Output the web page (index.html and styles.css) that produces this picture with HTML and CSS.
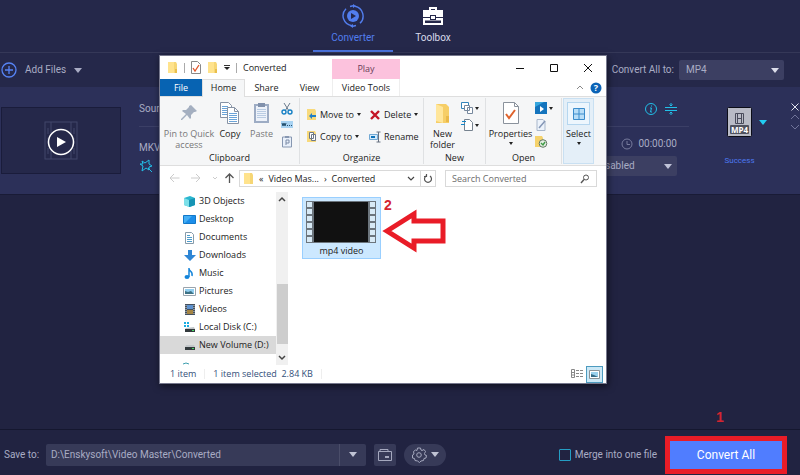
FILE: index.html
```html
<!DOCTYPE html>
<html lang="en">
<head>
<meta charset="utf-8">
<title>Video Converter</title>
<link rel="stylesheet" href="styles.css">
</head>
<body>
<div class="app">
  <nav class="tabs">
    <a class="tab active" href="#converter">
      <svg width="24" height="24" viewBox="0 0 24 24" fill="none" stroke="#527eee" stroke-width="1.4"><circle cx="12" cy="12" r="6" fill="#527eee" stroke="none"/><path d="M10 9v6l5-3z" fill="#25284a" stroke="none"/><path d="M14 2.3a10 10 0 0 1 5 17M11 21.7a10 10 0 0 1-6-17M9 2.5l3-.7M15 21.5l-3 .7"/><path d="M12 0v4l3-2zM12 20v4l-3-2z" fill="#527eee" stroke="none"/></svg>
      <span>Converter</span>
    </a>
    <a class="tab" href="#toolbox">
      <svg width="24" height="24" viewBox="0 0 24 24" fill="#fff"><path d="M8 6V3h8v3h6v7h-7v-2H9v2H2V6zM10 6h4V5h-4z" fill-rule="evenodd"/><path d="M10 12h4v3h-4z"/><path d="M2 14h7v2h6v-2h7v7H2zM4 16.500V19h16v-2.500z" fill-rule="evenodd"/></svg>
      <span>Toolbox</span>
    </a>
  </nav>

  <div class="toolbar">
    <button class="add" type="button">
      <svg width="16" height="16" viewBox="0 0 16 16" fill="none" stroke="#5683f5" stroke-width="1.3"><circle cx="8" cy="8" r="7"/><path d="M8 4v8M4 8h8"/></svg>
      <span>Add Files</span>
      <svg width="8" height="5" viewBox="0 0 8 5"><path d="M0 0h8L4 5z" fill="#a9acc4"/></svg>
    </button>
    <label class="to" for="format">Convert All to:</label>
    <span class="pick format"><select id="format"><option>MP4</option></select><svg width="8" height="5" viewBox="0 0 8 5"><path d="M0 0h8L4 5z" fill="#dcdeea"/></svg></span>
  </div>

  <main class="list">
    <article class="card">
      <div class="thumb">
        <svg width="36" height="42" viewBox="0 0 36 42" fill="none" stroke="#42466a"><rect x="2" y="2" width="32" height="37"/><path d="M8 2v37M28 2v37M8 15h20M8 26h20M5 8v6M5 18v6M5 28v6M31 8v6M31 18v6M31 28v6"/><circle cx="18" cy="22" r="12.500" fill="#25284a" stroke="#fff" stroke-width="1.500"/><path d="M14 17v10l9-5z" fill="#fff" stroke="none"/></svg>
      </div>
      <div class="details">
        <div class="source">
          <span>Source:</span>
          <span class="tools">
            <svg width="12" height="12" viewBox="0 0 12 12" fill="none" stroke="#22bfe8"><circle cx="6" cy="6" r="5.500"/><path d="M5 5h1.500L5.500 9H7M6.500 2.500v1"/></svg>
            <svg width="12" height="12" viewBox="0 0 12 12" fill="none" stroke="#22bfe8"><path d="M0 4.500h12M0 7.500h12M6 0v3M6 9v3M4.500 1.500L6 3l1.500-1.500M4.500 10.500L6 9l1.500 1.500"/></svg>
          </span>
        </div>
        <div class="meta">
          <span>MKV</span>
          <time><svg width="12" height="12" viewBox="0 0 12 12" fill="none" stroke="#777b9d"><circle cx="6" cy="6" r="5"/><path d="M6 3v3.500h3"/></svg>00:00:00</time>
        </div>
        <div class="extra">
          <svg width="14" height="14" viewBox="0 0 14 14" fill="none" stroke="#22bfe8"><path d="M3 2l3 2 4-3v4l3 2-3 1v3L7 9l-4 3 1-5-3-2h3zM9 9l4 4"/></svg>
          <span class="pick subtitle"><select aria-label="Subtitle"><option>Disabled</option></select><svg width="8" height="5" viewBox="0 0 8 5"><path d="M0 0h8L4 5z" fill="#c0c3d8"/></svg></span>
        </div>
      </div>
      <div class="result">
        <button class="profile" type="button" aria-label="Output profile">
          <svg width="25" height="31" viewBox="0 0 25 31"><rect x=".5" y=".5" width="24" height="29" rx="1" fill="#b9bbc6" stroke="#0c0d18"/><path d="M8.500 6.500h8v10h-8zM10.500 6v11M14.500 6v11M10.500 11.500h4" fill="none" stroke="#4a4c5c"/><rect x="3" y="18" width="19" height="9" rx="1" fill="#50525f"/><text x="12.500" y="25.500" text-anchor="middle" class="badge">MP4</text></svg>
          <svg width="8" height="5" viewBox="0 0 8 5"><path d="M0 0h8L4 5z" fill="#22cdf2"/></svg>
        </button>
        <span class="success">Success</span>
      </div>
      <div class="order">
        <svg width="10" height="30" viewBox="0 0 10 30" fill="none"><path d="M1.500 1.500l7 7M8.500 1.500l-7 7" stroke="#e1e3ee"/><path d="M1 17l4-4 4 4M1 23l4 4 4-4" stroke="#70749a"/></svg>
      </div>
    </article>
  </main>

  <footer class="footer">
    <label for="path">Save to:</label>
    <div class="path"><input id="path" type="text" value="D:\Enskysoft\Video Master\Converted"><button type="button" aria-label="Recent folders"><svg width="8" height="5" viewBox="0 0 8 5"><path d="M0 0h8L4 5z" fill="#c0c3d4"/></svg></button></div>
    <button class="open" type="button" aria-label="Open folder"><svg width="14" height="12" viewBox="0 0 14 12" fill="none" stroke="#a5a8be"><path d="M.5 2.500h13v9H.5zM2 2.500V.500h8v2"/><path d="M7 8h4" stroke-width="2"/></svg></button>
    <button class="settings" type="button" aria-label="Settings"><svg width="16" height="16" viewBox="0 0 16 16" fill="none" stroke="#a5a8be"><path d="M6.500 1h3l.5 2 1 .5 2-1 1.500 2-1 2 .5 1.500 1.500.5-.5 2.500-2 .5-.5 2-2.500.5-1.500 1.500-2-1.500-2.500-.5-.5-2-2-.5V8l1.500-1-.5-2.500 2-1.500 1.500.5z"/><circle cx="8" cy="8" r="2.300"/></svg><svg width="8" height="5" viewBox="0 0 8 5"><path d="M0 0h8L4 5z" fill="#c0c3d4"/></svg></button>
    <label class="merge"><input type="checkbox">Merge into one file</label>
    <div class="action"><button class="convert" type="button">Convert All</button><span class="note one">1</span></div>
  </footer>
</div>

<section class="explorer" aria-label="Converted">
  <header class="titlebar">
    <div class="quick">
      <svg width="11" height="13" viewBox="0 0 11 13"><path d="M1 1h8l1 2v9H1z" fill="#f6d675"/><path d="M1 1h6v11H1z" fill="#ffe38d"/><path d="M8 8h2v4H8z" fill="#e9bf4c"/></svg>
      <i></i>
      <svg width="10" height="13" viewBox="0 0 10 13"><path d="M.5.500h6l3 3v9h-9z" fill="#fff" stroke="#898989"/><path d="M2 7l2 3 4-6" fill="none" stroke="#e2562a" stroke-width="1.300"/></svg>
      <svg width="11" height="13" viewBox="0 0 11 13"><path d="M1 1h8l1 2v9H1z" fill="#f6d675"/><path d="M1 1h6v11H1z" fill="#ffe38d"/><path d="M8 8h2v4H8z" fill="#e9bf4c"/></svg>
      <svg width="6" height="6" viewBox="0 0 6 6"><path d="M0 .500h6" stroke="#333"/><path d="M0 2h6L3 5z" fill="#222"/></svg>
      <i></i>
      <span>Converted</span>
    </div>
    <span class="context">Play</span>
    <div class="controls">
      <button type="button" aria-label="Minimize"><svg width="10" height="10"><path d="M1 5.500h8" stroke="#111"/></svg></button>
      <button type="button" aria-label="Maximize"><svg width="10" height="10"><path d="M1.500 1.500h7v7h-7z" fill="none" stroke="#111"/></svg></button>
      <button type="button" aria-label="Close"><svg width="10" height="10"><path d="M1 1l8 8M9 1L1 9" stroke="#111"/></svg></button>
    </div>
  </header>
  <nav class="menu">
    <a class="file" href="#file">File</a><a class="home" href="#home">Home</a><a href="#share">Share</a><a href="#view">View</a><a class="video" href="#video">Video Tools</a>
    <span class="help"><svg width="8" height="5" viewBox="0 0 8 5"><path d="M1 4l3-3 3 3" fill="none" stroke="#888"/></svg><svg width="12" height="12" viewBox="0 0 12 12"><circle cx="6" cy="6" r="5.500" fill="#0b63b6"/><text x="6" y="9" text-anchor="middle" class="question">?</text></svg></span>
  </nav>

  <div class="ribbon">
    <div class="group clipboard">
      <div class="tools-row">
        <button class="big dim pin" type="button"><svg width="18" height="22" viewBox="0 0 18 22"><path d="M11 3l6 6-2 1-1 0-3 3v3l-1 1-3-4-5 5-1 0 0-1 5-5-4-3 1-1h3l3-3V4z" fill="#a4afc0"/></svg>Pin to Quick<br>access</button>
        <button class="big copy" type="button"><svg width="20" height="22" viewBox="0 0 20 22"><path d="M.500.500h8l3 3v12H.5z" fill="#fff" stroke="#8793a5"/><path d="M2 4.500h6M2 6.500h7M2 8.500h7M2 10.500h7M2 12.500h7" stroke="#6ba4d8"/><path d="M7.500 5.500h7l4 4v12h-11z" fill="#fff" stroke="#8793a5"/><path d="M14.500 5.500v4h4" fill="none" stroke="#8793a5"/><path d="M9 11.500h8M9 13.500h8M9 15.500h8M9 17.500h8M9 19.500h8" stroke="#6ba4d8"/></svg>Copy</button>
        <button class="big dim paste" type="button"><svg width="18" height="22" viewBox="0 0 18 22"><path d="M1 2h15v19H1z" fill="#9dacc4"/><path d="M3 4h11v15H3z" fill="#edf2fa"/><path d="M5 1h7v4H5z" fill="#8191ac"/><path d="M4 7.500h9M4 9.500h9M4 11.500h9M4 13.500h9M4 15.500h9" stroke="#b9cce3"/></svg>Paste</button>
        <div class="stack small edit">
          <svg width="12" height="12" viewBox="0 0 12 12" fill="none"><path d="M3 0l5 8M9 0L4 8" stroke="#697a8c"/><circle cx="3" cy="9" r="2" stroke="#1680c5" stroke-width="1.400"/><circle cx="9" cy="9" r="2" stroke="#1680c5" stroke-width="1.400"/></svg>
          <svg width="12" height="8" viewBox="0 0 12 8"><path d="M0 0h12v7H0z" fill="#a7d2f2"/><path d="M1 2l1 3 1-3 1 3 1-3M6 4.500h1M8 4.500h1M10 4.500h1" fill="none" stroke="#24506f"/></svg>
          <svg width="12" height="13" viewBox="0 0 12 13"><path d="M1.500 2h9v10h-9z" fill="#e9f0fa" stroke="#8797b1"/><path d="M4 1h4v2H4z" fill="#8797b1"/><path d="M5 10V5h3v3H5" fill="none" stroke="#7c8ca7"/></svg>
        </div>
      </div>
      <span class="name">Clipboard</span>
    </div>
    <div class="group organize">
      <div class="tools-row">
        <div class="stack">
          <button type="button"><svg width="11" height="13" viewBox="0 0 11 13"><path d="M1 1h8l1 2v9H1z" fill="#f8da7c"/><path d="M10 7H6V5L3 8l3 3V9h4z" fill="#207fc8"/></svg>Move to<b></b></button>
          <button type="button"><svg width="11" height="13" viewBox="0 0 11 13"><path d="M1 1h8l1 2v9H1z" fill="#f8da7c"/><path d="M3.500 2.500h4v6h-4zM5.500 4.500h4v6h-4z" fill="#fff" stroke="#6c7888"/></svg>Copy to<b></b></button>
        </div>
        <div class="stack second">
          <button type="button"><svg width="12" height="12" viewBox="0 0 12 12"><path d="M2 2l8 8M10 2l-8 8" stroke="#c31526" stroke-width="2.400"/></svg>Delete<b></b></button>
          <button type="button"><svg width="12" height="12" viewBox="0 0 12 12"><path d="M.500 3.500h8v5h-8z" fill="#d5eafa" stroke="#72a9d4"/><path d="M2 6h4" stroke="#0d72b9" stroke-width="2"/><path d="M9.500 1v10M7.500 1h4M7.500 11h4" stroke="#667080"/></svg>Rename</button>
        </div>
      </div>
      <span class="name">Organize</span>
    </div>
    <div class="group new">
      <div class="tools-row">
        <button class="big" type="button"><svg width="18" height="22" viewBox="0 0 18 22"><path d="M2 2h10l3 3v16H2z" fill="#f6ce67"/><path d="M2 2l7 3v16l-7-2z" fill="#ffe69b"/><path d="M12 14h3v6h-3z" fill="#eab949"/></svg>New<br>folder</button>
        <div class="stack small">
          <span><svg width="12" height="12" viewBox="0 0 12 12" fill="#fff" stroke="#76889d"><path d="M.500.500h7v6h-7z" stroke="#3284bb"/><path d="M3.500 3.500h5v5h-5zM6.500 5.500h5v6h-5z"/></svg><b></b></span>
          <span><svg width="12" height="12" viewBox="0 0 12 12"><path d="M3.500.500h5l3 3v8h-8z" fill="#fff" stroke="#76828f"/><path d="M1 2.500h4M0 5.500h4" stroke="#1586c7"/></svg><b></b></span>
        </div>
      </div>
      <span class="name">New</span>
    </div>
    <div class="group launch">
      <div class="tools-row">
        <button class="big" type="button"><svg width="16" height="22" viewBox="0 0 16 22"><path d="M.500.500h11l4 4v17H.5z" fill="#fff" stroke="#8a929c"/><path d="M11.500.500v4h4" fill="none" stroke="#8a929c"/><path d="M3 12l3 4 6-8" fill="none" stroke="#df632d" stroke-width="2"/></svg>Properties<b></b></button>
        <div class="stack small">
          <span><svg width="12" height="12" viewBox="0 0 12 12"><path d="M0 0h12v12H0z" fill="#1474bd"/><path d="M0 0h9L0 5z" fill="#36a6dd"/><path d="M5 4v6l4-3z" fill="#fff"/></svg><b></b></span>
          <svg width="12" height="12" viewBox="0 0 12 12"><path d="M2 .500h6l2 2v9H2z" fill="#edf3fb" stroke="#a8b7cb"/><path d="M4 9l6-7" stroke="#8496b5" stroke-width="1.500"/></svg>
          <svg width="13" height="12" viewBox="0 0 13 12"><path d="M0 0h7l1 2v9H0z" fill="#f5d26c"/><circle cx="8" cy="7.500" r="3.800" fill="#e5eee3" stroke="#617562"/><path d="M6 7l2 2 2-3" fill="none" stroke="#3e9b46" stroke-width="1.400"/></svg>
        </div>
      </div>
      <span class="name">Open</span>
    </div>
    <button class="select" type="button"><span><svg width="12" height="12" viewBox="0 0 12 12" fill="#b8def8" stroke="#3c8dcc"><path d="M.500.500h11v11H.5zM6 .500v11M.500 6h11"/></svg></span>Select<b></b></button>
  </div>

  <div class="location">
    <div class="arrows">
      <svg width="76" height="12" viewBox="0 0 76 12" fill="none"><path d="M10.500 6H1M5 2L1 6l4 4M22 6h9M27 2l4 4-4 4" stroke="#cccccc"/><path d="M44 5l2 2 2-2" stroke="#ccc"/><path d="M60.500 11V2M56.500 6l4-4 4 4" stroke="#555" stroke-width="1.300"/></svg>
    </div>
    <div class="crumbs"><svg width="11" height="13" viewBox="0 0 11 13"><path d="M1 1h8l1 2v9H1z" fill="#f6d675"/><path d="M1 1h6v11H1z" fill="#ffe38d"/></svg><span>«</span><a href="#master">Video Mas...</a><span>›</span><a href="#converted">Converted</a>
      <svg class="down" width="8" height="6" viewBox="0 0 8 6"><path d="M1 1l3 3 3-3" fill="none" stroke="#444" stroke-width="1.200"/></svg>
      <button type="button" aria-label="Refresh"><svg width="10" height="10" viewBox="0 0 10 10" fill="none" stroke="#555" stroke-width="1.200"><path d="M7 2a3.500 3.500 0 1 1-4 0M3.500 0v2.500H1"/></svg></button>
    </div>
    <div class="search"><input type="search" aria-label="Search Converted" placeholder="Search Converted"><svg width="10" height="10" viewBox="0 0 10 10" fill="none" stroke="#555"><circle cx="6" cy="3.500" r="2.500"/><path d="M4 5.500L1 9" stroke-width="1.400"/></svg></div>
  </div>

  <div class="content">
    <ul class="places">
      <li><svg width="13" height="13" viewBox="0 0 13 13"><path d="M1 3l6-2 5 2v7l-5 2-6-2z" fill="#2bb6cf"/><path d="M1 3l5 2v7l-5-2z" fill="#7de0e9"/><path d="M6 5l6-2v7l-6 2z" fill="#1694b4"/></svg>3D Objects</li>
      <li><svg width="13" height="13" viewBox="0 0 13 13"><path d="M.500 2.500h12v8H.5z" fill="#1c8eea" stroke="#1178c9"/><path d="M1 3h8l-7 7H1z" fill="#45aff5"/></svg>Desktop</li>
      <li><svg width="13" height="13" viewBox="0 0 13 13"><path d="M2.500 1.500h6l2 2v9h-8z" fill="#fff" stroke="#879baa"/><path d="M4 4.500h3M4 6.500h5M4 8.500h5M4 10.500h5" stroke="#4c9dcd"/></svg>Documents</li>
      <li><svg width="13" height="13" viewBox="0 0 13 13"><path d="M5 1h4v5h4l-6 6-6-6h4z" fill="#2e86d5"/></svg>Downloads</li>
      <li><svg width="13" height="13" viewBox="0 0 13 13"><path d="M6 1v9M6 2c1 3 4 2 3 7" fill="none" stroke="#1384da" stroke-width="1.500"/><ellipse cx="4" cy="10" rx="2.500" ry="2" fill="#1384da"/></svg>Music</li>
      <li><svg width="13" height="13" viewBox="0 0 13 13"><path d="M.500 2.500h12v8H.5z" fill="#fff" stroke="#9aa4ad"/><path d="M2 4h9v5H2z" fill="#91cef0"/><path d="M2 9V6l3 1 3-1 3 3z" fill="#3c7184"/></svg>Pictures</li>
      <li><svg width="13" height="13" viewBox="0 0 13 13"><path d="M2 1h10v11H2z" fill="#45505d"/><path d="M4 2h6v4H4z" fill="#5d91ce"/><path d="M4 7h6v4H4z" fill="#a58544"/><path d="M3 2v9M11 2v9" stroke="#d4dce3" stroke-dasharray="1 1"/></svg>Videos</li>
      <li><svg width="13" height="13" viewBox="0 0 13 13"><path d="M1 1h2v2H1zM4 1h2v2H4zM1 4h2v2H1zM4 4h2v2H4z" fill="#19ace0"/><path d="M3 7l8-1 1 2H2z" fill="#c2c6c9"/><path d="M2 8h10v3H2z" fill="#333a3d"/><path d="M9 9.500h2" stroke="#48dc67"/></svg>Local Disk (C:)</li>
      <li class="current"><svg width="13" height="13" viewBox="0 0 13 13"><path d="M3 6h8l1 2H2z" fill="#c2c6c9"/><path d="M2 8h10v3H2z" fill="#333a3d"/><path d="M9 9.500h2" stroke="#48dc67"/></svg>New Volume (D:)</li>
      <li><svg width="13" height="13" viewBox="0 0 13 13"><path d="M0 7l3-1 3 1" stroke="#3b9dad" fill="none"/></svg></li>
    </ul>
    <div class="scroll"><svg width="8" height="6" viewBox="0 0 8 6"><path d="M1 5l3-3 3 3" fill="none" stroke="#444" stroke-width="1.500"/></svg><div></div><svg width="8" height="6" viewBox="0 0 8 6"><path d="M1 1l3 3 3-3" fill="none" stroke="#444" stroke-width="1.500"/></svg></div>
    <div class="files">
      <figure class="clip">
        <svg width="70" height="42" viewBox="0 0 70 42"><path d="M0 0h70v42H0z" fill="#6c757d"/><path d="M8 1h54v40H8z" fill="#111"/><path d="M3.500 1v41M66.500 1v41" stroke="#d8eaf6" stroke-width="5" stroke-dasharray="5 2"/></svg>
        <figcaption>mp4 video</figcaption>
        <svg class="pointer" width="66" height="44" viewBox="0 0 66 44"><path d="M5 22L32 5v7h29v20H32v7z" fill="#fff" stroke="#e91c27" stroke-width="5"/></svg>
        <span class="note two">2</span>
      </figure>
    </div>
  </div>
  <div class="status"><span>1 item</span><span>1 item selected&nbsp; 2.84 KB</span>
    <div class="views"><svg width="12" height="10" viewBox="0 0 12 10" fill="none" stroke="#888"><path d="M.500.500h3v8h-3zM.500 3.500h3M.500 6h3M5 1.500h3M5 4.500h3M5 7.500h3M9 1.500h3M9 4.500h3M9 7.500h3"/></svg><span><svg width="11" height="9" viewBox="0 0 11 9"><path d="M.500.500h10v8H.5z" fill="#fff" stroke="#8b9297"/><path d="M2 2h7v5H2z" fill="#9ad1ed"/><path d="M2 7V4l3 1 4 2z" fill="#356a85"/></svg></span></div>
  </div>
</section>
</body>
</html>
```
FILE: styles.css
```css
* { box-sizing: border-box; }
body { margin: 0; font: 10px/14px Roboto, "Noto Sans", sans-serif; color: #a9acc4; background: #212341; overflow: hidden; }
button, input, select { font: inherit; color: inherit; border: 0; background: none; padding: 0; margin: 0; }
a { color: inherit; text-decoration: none; }
svg { display: block; flex: none; }

.app { display: flex; flex-direction: column; height: 100vh; background: #212341; }
.tabs { display: flex; justify-content: center; height: 53px; padding-right: 14px; background: #25284a; border-bottom: 1px solid #353858; }
.tab { display: flex; flex-direction: column; align-items: center; width: 80px; padding-top: 4px; gap: 3px; color: #d8daea; border-bottom: 2px solid transparent; }
.tab.active { color: #527eee; border-color: #4a72dd; }
.toolbar { display: flex; align-items: center; height: 34px; padding: 0 16px 0 1px; background: #25284a; }
.add { display: flex; align-items: center; gap: 8px; }
.to { margin-left: auto; margin-right: 5px; }
.pick { display: flex; align-items: center; position: relative; height: 20px; background: #3c3f62; border-radius: 2px; }
.pick select { appearance: none; width: 100%; height: 100%; padding: 0 7px; outline: 0; }
.pick svg { position: absolute; right: 5px; pointer-events: none; }
.format { width: 105px; }
.list { flex: 1; }
.card { display: flex; height: 108px; background: #2c3059; border-bottom: 1px solid #191b36; }
.thumb { display: flex; align-items: center; justify-content: center; width: 120px; height: 67px; margin: 20px 18px 0 1px; background: #25284a; border: 1px solid #1a1c3b; }
.details { flex: 1; padding-top: 14px; }
.source { display: flex; justify-content: space-between; height: 26px; padding: 1px 12px 0 0; border-bottom: 1px solid #3b3f66; }
.tools { display: flex; gap: 8px; padding-top: 1px; }
.meta { display: flex; justify-content: space-between; height: 29px; padding: 10px 12px 0 0; }
.meta time { display: flex; align-items: center; gap: 5px; height: 14px; }
.meta > span { padding-top: 4px; }
.extra { display: flex; justify-content: space-between; align-items: center; padding-right: 12px; }
.subtitle { width: 88px; }
.result { display: flex; flex-direction: column; align-items: center; width: 101px; padding-top: 20px; }
.profile { display: flex; align-items: center; gap: 7px; padding-left: 15px; }
.badge { font: bold 8px "Noto Sans", sans-serif; fill: #fff; }
.success { margin-top: 16px; font-size: 8px; color: #4d78f0; }
.order { width: 10px; padding-top: 15px; display: flex; justify-content: center; }

.footer { display: flex; align-items: center; height: 46px; padding: 4px 13px 0 4px; border-top: 1px solid #15172f; }
.footer > label:first-child { width: 42px; }
.path { display: flex; width: 320px; height: 22px; background: #373a58; border-radius: 2px; }
.path input { flex: 1; padding: 0 5px; outline: 0; }
.path button { display: flex; align-items: center; justify-content: center; width: 27px; border-left: 1px solid #4a4d69; }
.open { display: flex; align-items: center; justify-content: center; width: 22px; height: 22px; margin: 0 8px; background: #373a58; border-radius: 2px; }
.settings { display: flex; align-items: center; justify-content: center; gap: 4px; width: 42px; height: 22px; background: #373a58; border-radius: 11px; }
.merge { display: flex; align-items: center; gap: 4px; margin-left: auto; margin-right: 8px; }
.merge input { appearance: none; width: 12px; height: 12px; border: 1px solid #259dc3; border-radius: 1px; }
.action { position: relative; }
.convert { display: block; width: 122px; height: 38px; color: #fff; font-size: 12px; background: #507dff; border: 5px solid #e91c27; }
.note { position: absolute; font: bold 14px/14px "Liberation Sans", sans-serif; color: #d42430; }
.one { left: 51px; top: -26px; }

.explorer { position: absolute; left: 159px; top: 55px; width: 448px; color: #222; font: 9px/10px "Open Sans", "Noto Sans", sans-serif; background: #fff; border: 1px solid #76788d; box-shadow: 1px 2px 7px rgb(0 0 0 / 55%); }
.explorer b { display: inline-block; border: 2px solid transparent; border-top: 3px solid #222; border-bottom: 0; }
.titlebar { display: flex; height: 23px; }
.quick { display: flex; align-items: center; width: 172px; gap: 6px; padding-left: 7px; }
.quick i { width: 1px; height: 10px; background: #aaa; }
.context { width: 68px; margin-top: 3px; padding-top: 5px; text-align: center; color: #6a3e59; background: #fcc2dd; }
.controls { display: flex; margin-left: auto; padding-right: 1px; }
.controls button { display: flex; align-items: center; justify-content: center; width: 34px; }
.menu { display: flex; height: 18px; border-bottom: 1px solid #dedede; line-height: 17px; text-align: center; }
.menu a { width: 43px; }
.menu .file { width: 42px; color: #fff; background: #0763b2; }
.menu .home { height: 18px; background: #f5f6f7; box-shadow: inset 1px 1px #dedede, inset -1px 0 #dedede; }
.menu .video { width: 68px; margin-left: 1px; border: 1px solid #eee; border-width: 0 1px; }
.help { display: flex; align-items: center; gap: 6px; margin-left: auto; padding-right: 4px; }
.question { font: bold 9px "Noto Sans", sans-serif; fill: #fff; }
.ribbon { display: flex; height: 69px; padding: 1px 11px 1px 0; background: #f5f6f7; border-bottom: 1px solid #dedede; }
.group { display: flex; flex-direction: column; border-right: 1px solid #dfe1e3; }
.clipboard { width: 140px; }
.organize { width: 124px; }
.new { width: 62px; }
.launch { width: 76px; margin-right: 1px; }
.tools-row { display: flex; height: 55px; padding-top: 4px; }
.name { text-align: center; }
.big { display: flex; flex-direction: column; align-items: center; line-height: 11px; gap: 0; }
.big svg { margin-bottom: 4px; }
.big b, .select b { margin-top: 3px; }
.dim { color: #777; }
.pin { width: 58px; }
.copy { width: 24px; }
.paste { width: 39px; }
.new .big { width: 37px; }
.launch .big { width: 49px; }
.stack { display: flex; flex-direction: column; gap: 9px; padding: 6px 0 0 6px; }
.stack button { display: flex; align-items: center; gap: 3px; height: 13px; }
.stack.second { margin-left: 4px; padding-left: 4px; }
.stack.small { gap: 5px; padding: 0; }
.stack.edit { gap: 6px; padding-top: 1px; }
.stack span { display: flex; align-items: center; gap: 2px; }
.select { display: flex; flex-direction: column; align-items: center; width: 31px; background: #e4eff8; border: 1px solid #c9e0f2; }
.select span { display: flex; align-items: center; justify-content: center; width: 23px; height: 23px; margin: 3px 0 4px; background: #edf6fd; border: 1px solid #b5d6ef; }
.location { display: flex; height: 26px; padding: 4px 9px 5px; }
.arrows { width: 79px; padding: 2px 0 0 9px; }
.crumbs, .search { display: flex; align-items: center; border: 1px solid #d9d9d9; }
.location { padding-left: 0; }
.crumbs { flex: 1; gap: 5px; padding-left: 3px; }
.crumbs .down { margin-left: auto; }
.crumbs button { display: flex; align-items: center; justify-content: center; width: 15px; align-self: stretch; border-left: 1px solid #d9d9d9; }
.search { width: 152px; margin-left: 9px; padding: 0 6px; }
.search input { flex: 1; min-width: 0; outline: 0; }
.search input::placeholder { color: #6d6d6d; opacity: 1; }
.content { display: flex; height: 173px; }
.places { width: 116px; height: 173px; margin: 0; padding: 0; list-style: none; overflow: hidden; }
.places li { display: flex; align-items: center; gap: 3px; height: 18px; padding-left: 23px; }
.places .current { background: #d9d9d9; }
.scroll { display: flex; flex-direction: column; align-items: center; width: 12px; padding: 4px 0; background: #f0f0f0; }
.scroll div { width: 11px; height: 60px; margin: auto 0 11px; background: #cdcdcd; }
.files { flex: 1; padding: 5px 14px; }
.clip { position: relative; width: 79px; height: 62px; margin: 0; padding: 3px; text-align: center; background: #cce8ff; border: 1px solid #99cfff; }
.clip figcaption { margin-top: 3px; }
.pointer { position: absolute; left: 79px; top: 11px; }
.two { left: 81px; top: 0; }
.status { display: flex; height: 18px; align-items: center; padding-left: 10px; color: #34507a; }
.status > span { padding-right: 8px; margin-right: 8px; border-right: 1px solid #eee; }
.views { display: flex; align-items: center; gap: 3px; margin-left: auto; padding-right: 3px; }
.views span { display: flex; align-items: center; justify-content: center; width: 17px; height: 17px; background: #cbe8f6; border: 1px solid #4d9bbf; }
```
